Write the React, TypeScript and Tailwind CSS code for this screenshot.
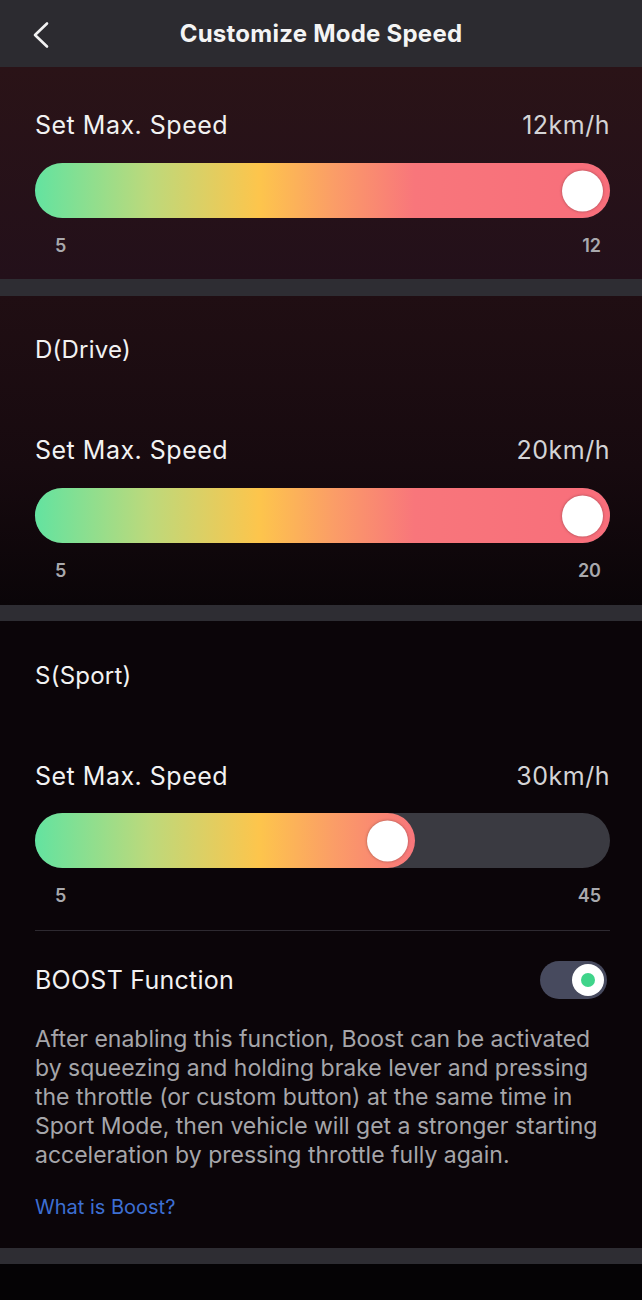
import React from "react";

const font = { fontFamily: "Inter, 'Noto Sans', sans-serif" };

function SpeedSlider({ min, max, value }: { min: number; max: number; value: number }) {
  const pct = (value - min) / (max - min);
  // thumb travels between the two rounded ends of the track
  const fillPx = 56 + 519 * pct;
  return (
    <div>
      <div className="relative h-[55px] w-full rounded-full bg-[#3a3a41]">
        <div
          className="relative h-full rounded-full bg-[linear-gradient(90deg,#63e3a0_0%,#bdd97b_20%,#fdc54c_39%,#fb9d67_52%,#f8767b_66%,#f86e7b_100%)] bg-no-repeat"
          style={{ width: fillPx, backgroundSize: "575px 100%" }}
        >
          <div className="absolute right-[7px] top-1/2 h-[41px] w-[41px] -translate-y-1/2 rounded-full bg-white shadow-[0_0_3px_rgba(0,0,0,0.35)]" />
        </div>
      </div>
      <div className="mt-[16px] flex justify-between pl-[20px] pr-[9px] text-[18px] font-semibold leading-[24px] text-[#a9a9ad]">
        <span>{min}</span>
        <span>{max}</span>
      </div>
    </div>
  );
}

function SpeedRow({ value, unit }: { value: number; unit: string }) {
  return (
    <div className="flex items-center justify-between text-[25px] leading-[30px] tracking-[0.02em]">
      <span className="text-[#f2f2f2]">Set Max. Speed</span>
      <span className="text-[#d4d4d6]">
        {value}
        {unit}
      </span>
    </div>
  );
}

export default function App() {
  return (
    <div className="min-h-[1300px] w-[642px] bg-[#050305]" style={font}>
      {/* Header */}
      <div className="relative flex h-[67px] items-center justify-center bg-[#2c2b30]">
        <svg
          className="absolute left-[31px] top-[21px]"
          width="20"
          height="28"
          viewBox="0 0 20 28"
          fill="none"
          stroke="#f2f2f2"
          strokeWidth="2.6"
          strokeLinecap="round"
          strokeLinejoin="round"
        >
          <path d="M16 2.5 L4 14 L16 25.5" />
        </svg>
        <h1 className="text-[24px] font-bold leading-[30px] tracking-[0.01em] text-[#f4f4f4]">Customize Mode Speed</h1>
      </div>

      {/* First mode */}
      <section className="bg-[linear-gradient(180deg,#2a1317_0%,#23101a_100%)] pb-[21px] pl-[35px] pr-[32px] pt-[43px]">
        <SpeedRow value={12} unit="km/h" />
        <div className="mt-[23px]">
          <SpeedSlider min={5} max={12} value={12} />
        </div>
      </section>
      <div className="h-[17px] bg-[#2e2d33]" />

      {/* Drive */}
      <section className="bg-[linear-gradient(180deg,#200e13_0%,#170a0f_55%,#0a0508_100%)] pb-[22px] pl-[35px] pr-[32px] pt-[39px]">
        <div className="text-[24px] leading-[30px] tracking-[0.01em] text-[#f2f2f2]">D(Drive)</div>
        <div className="mt-[70px]">
          <SpeedRow value={20} unit="km/h" />
        </div>
        <div className="mt-[23px]">
          <SpeedSlider min={5} max={20} value={20} />
        </div>
      </section>
      <div className="h-[16px] bg-[#2e2d33]" />

      {/* Sport */}
      <section className="bg-[#0b0509] pb-[28px] pl-[35px] pr-[32px] pt-[40px]">
        <div className="text-[24px] leading-[30px] tracking-[0.01em] text-[#f2f2f2]">S(Sport)</div>
        <div className="mt-[70px]">
          <SpeedRow value={30} unit="km/h" />
        </div>
        <div className="mt-[22px]">
          <SpeedSlider min={5} max={45} value={30} />
        </div>
        <div className="mt-[22px] h-px bg-[#2e2a31]" />

        <div className="mt-[30px] flex items-center justify-between">
          <span className="text-[25px] leading-[30px] tracking-[0.01em] text-[#f2f2f2]">BOOST Function</span>
          <div className="mr-[3px] flex h-[38px] w-[67px] items-center justify-end rounded-full bg-[#474a5e] pr-[3px]">
            <div className="flex h-[32px] w-[32px] items-center justify-center rounded-full bg-white">
              <div className="h-[14px] w-[14px] rounded-full bg-[#3fd48a]" />
            </div>
          </div>
        </div>

        <p className="mt-[26px] text-[23px] leading-[29px] text-[#a6a6aa]">
          After enabling this function, Boost can be activated by squeezing and holding brake lever and pressing
          the throttle (or custom button) at the same time in Sport Mode, then vehicle will get a stronger starting
          acceleration by pressing throttle fully again.
        </p>
        <div className="mt-[24px] text-[20px] leading-[26px] text-[#3d6fd3]">What is Boost?</div>
      </section>
      <div className="h-[16px] bg-[#2e2d33]" />
    </div>
  );
}
